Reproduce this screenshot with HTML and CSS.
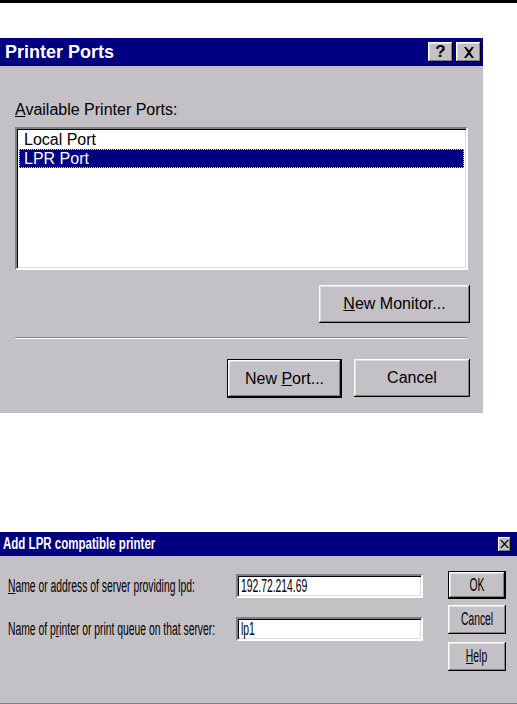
FILE: index.html
```html
<!doctype html>
<html>
<head>
    <link rel="stylesheet" href="styles.css">
</head>
<body>
    <div class="rule"></div>

    <div class="ports">
        <div class="ports-title">
            <span>Printer Ports</span>
            <div class="caption-btns">
                <div class="cap-btn help-q">?</div>
                <div class="cap-btn">
                    <svg width="12" height="11" viewBox="0 0 12 11"><path d="M1 0h2.2l2.8 3.6L8.8 0H11L7.2 5.5 11 11H8.8L6 7.4 3.2 11H1l3.8-5.5z" fill="#000"/></svg>
                </div>
            </div>
        </div>
        <div class="ports-body">
            <div class="ports-label"><u>A</u>vailable Printer Ports:</div>
            <div class="listbox">
                <div class="list-row">Local Port</div>
                <div class="list-row selected">LPR Port</div>
            </div>
            <div class="btn-row monitor-row">
                <button class="w95 monitor"><u>N</u>ew Monitor...</button>
            </div>
            <div class="separator"></div>
            <div class="btn-row">
                <button class="w95 default new-port">New <u>P</u>ort...</button>
                <button class="w95 cancel">Cancel</button>
            </div>
        </div>
    </div>

    <div class="lpr">
        <div class="lpr-title">
            <span class="narrow title-text">Add LPR compatible printer</span>
            <div class="lpr-close">
                <svg width="9" height="8" viewBox="0 0 9 8"><path d="M0 0h1.6l2.9 3 2.9-3H9L5.3 4 9 8H7.4L4.5 5 1.6 8H0l3.7-4z" fill="#000"/></svg>
            </div>
        </div>
        <div class="lpr-body">
            <div class="fields">
                <div class="field">
                    <label><span class="narrow"><u>N</u>ame or address of server providing lpd:</span></label>
                    <div class="textbox"><span class="narrow">192.72.214.69</span></div>
                </div>
                <div class="field">
                    <label><span class="narrow">Name of p<u>r</u>inter or print queue on that server:</span></label>
                    <div class="textbox"><span class="narrow">lp1</span></div>
                </div>
            </div>
            <div class="side-btns">
                <button class="w95 default ok"><span class="narrow mid">OK</span></button>
                <button class="w95 lpr-cancel"><span class="narrow mid">Cancel</span></button>
                <button class="w95 help"><span class="narrow mid"><u>H</u>elp</span></button>
            </div>
        </div>
    </div>
</body>
</html>
```

FILE: styles.css
```css
* {
    box-sizing: border-box;
}
body {
    margin: 0;
    background: #fff;
    font-family: "Liberation Sans", Arial, sans-serif;
}
.rule {
    height: 3px;
    background: #000;
}

/* shared win95 bits */
.w95 {
    background: #c3c1c5;
    border: 0;
    padding: 0;
    color: #000;
    box-shadow: inset -1px -1px #000, inset 1px 1px #fff, inset -2px -2px #808080, inset 2px 2px #dfdfdf;
}
.w95.default {
    border: 1px solid #000;
}
.narrow {
    display: inline-block;
    white-space: nowrap;
    transform: scaleX(0.575);
    transform-origin: left center;
}
.narrow.mid {
    transform-origin: center;
}

/* Printer Ports dialog */
.ports {
    width: 483px;
    margin-top: 35px;
    background: #c3c1c5;
}
.ports-title {
    height: 28px;
    background: #000080;
    color: #fff;
    font-weight: bold;
    font-size: 18px;
    display: flex;
    align-items: center;
    justify-content: space-between;
    padding: 0 2px 0 5px;
}
.caption-btns {
    display: flex;
    gap: 3px;
}
.cap-btn {
    width: 25px;
    height: 20px;
    background: #c3c1c5;
    box-shadow: inset -1px -1px #000, inset 1px 1px #fff, inset -2px -2px #808080, inset 2px 2px #dfdfdf;
    display: flex;
    align-items: center;
    justify-content: center;
}
.help-q {
    color: #000;
    font-size: 17px;
    font-weight: bold;
}
.ports-body {
    padding: 34px 13px 15px 15px;
    font-size: 16px;
}
.ports-label {
    line-height: 20px;
}
.listbox {
    width: 453px;
    height: 143px;
    margin-top: 7px;
    background: #fff;
    border: 2px solid;
    border-color: #808080 #fff #fff #808080;
    box-shadow: inset 1px 1px #000, inset -1px -1px #dfdfdf;
    padding: 1px 2px;
}
.list-row {
    height: 19px;
    line-height: 19px;
    padding-left: 5px;
}
.list-row.selected {
    background: #000080;
    color: #fff;
    outline: 1px dotted #d8d880;
    outline-offset: -1px;
}
.btn-row {
    display: flex;
    justify-content: flex-end;
    gap: 12px;
}
.btn-row button {
    font-family: inherit;
    font-size: 16px;
}
.monitor-row {
    margin-top: 15px;
}
.monitor {
    width: 151px;
    height: 38px;
}
.separator {
    width: 452px;
    margin: 14px 0 20px;
    border-top: 1px solid #808080;
    border-bottom: 1px solid #fff;
}
.new-port {
    width: 115px;
    height: 39px;
}
.cancel {
    width: 116px;
    height: 38px;
}

/* Add LPR dialog */
.lpr {
    margin-top: 119px;
    height: 172px;
    background: #c3c1c5;
    border-bottom: 1px solid #808080;
    font-size: 18px;
}
.lpr-title {
    height: 24px;
    background: #000080;
    color: #fff;
    font-weight: bold;
    font-size: 16px;
    display: flex;
    align-items: center;
    justify-content: space-between;
    padding: 0 6px 0 3px;
}
.title-text {
    transform: scaleX(0.72);
}
.lpr-close {
    width: 13px;
    height: 15px;
    background: #c3c1c5;
    box-shadow: inset -1px -1px #000, inset 1px 1px #fff, inset -2px -2px #808080;
    display: flex;
    align-items: center;
    justify-content: center;
}
.lpr-body {
    display: flex;
    justify-content: space-between;
    padding: 15px 11px 0 8px;
}
.fields {
    display: flex;
    flex-direction: column;
    gap: 19px;
    padding-top: 3px;
}
.field {
    display: flex;
    align-items: center;
    height: 24px;
}
.field label {
    width: 228px;
}
.textbox {
    width: 187px;
    height: 24px;
    line-height: 20px;
    padding-left: 3px;
    background: #fff;
    border: 2px solid;
    border-color: #808080 #fff #fff #808080;
    box-shadow: inset 1px 1px #000, inset -1px -1px #dfdfdf;
}
.side-btns {
    display: flex;
    flex-direction: column;
}
.side-btns button {
    width: 58px;
    height: 29px;
    font-family: inherit;
    font-size: 18px;
}
.side-btns .ok {
    height: 28px;
}
.side-btns .lpr-cancel {
    margin-top: 6px;
}
.side-btns .help {
    margin-top: 8px;
}
```
